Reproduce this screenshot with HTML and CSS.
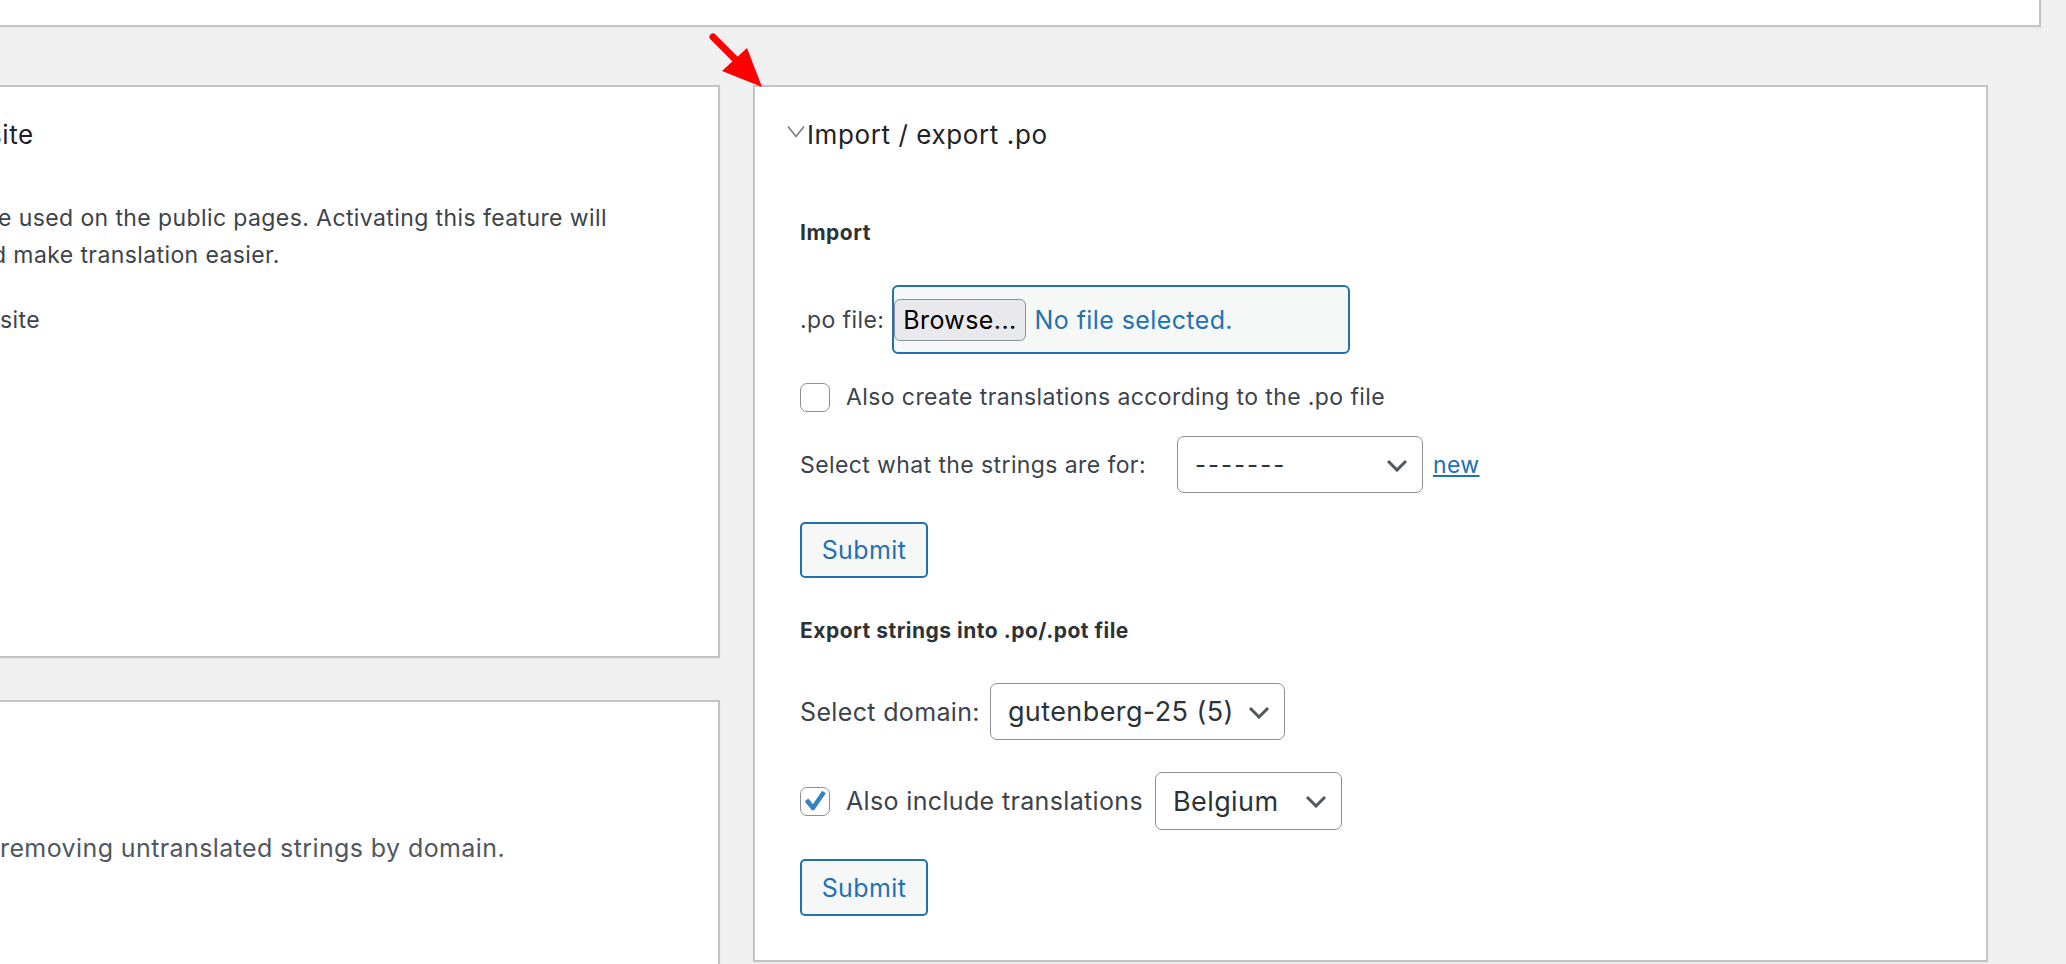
FILE: index.html
```html
<!DOCTYPE html>
<html lang="en">
<head>
  <meta charset="UTF-8">
  <title>String Translation - Import / export .po</title>
  <meta name="viewport" content="width=device-width, initial-scale=1.0">
  <link rel="stylesheet" href="styles.css">
</head>
<body>

  <!-- Top box (cut off) -->
  <div class="topbar"></div>

  <div class="columns">

    <!-- Left column, clipped by the window -->
    <div class="col-left">
      <div class="postbox box-track">
        <h2 class="box-title"><span class="cut-heading">site</span></h2>
        <p class="desc">
          <span class="line cut-1">e used on the public pages. Activating this feature will</span>
          <span class="line cut-2">d make translation easier.</span>
        </p>
        <p class="option">site</p>
      </div>
      <div class="postbox box-remove">
        <p class="desc muted">removing untranslated strings by domain.</p>
      </div>
    </div>

    <!-- Import / export .po -->
    <div class="postbox box-po">
      <h2 class="box-title po-title">
        <svg class="toggle" width="18" height="13" viewBox="0 0 18 13"><polyline points="1,1.5 9,11.5 17,1.5" fill="none" stroke="#787c82" stroke-width="1.6"/></svg>
        Import / export .po
      </h2>

      <h3 class="section import-title">Import</h3>

      <div class="row file-row">
        <span class="row-label">.po file:</span>
        <div class="file-input">
          <button type="button" class="browse">Browse...</button>
          <span class="file-name">No file selected.</span>
        </div>
      </div>

      <label class="row check-row">
        <span class="checkbox"></span>
        Also create translations according to the .po file
      </label>

      <div class="row select-row">
        <span class="row-label for-label">Select what the strings are for:</span>
        <span class="select-wrap wrap-context">
          <select class="select">
            <option>-------</option>
          </select>
          <svg class="arrow" width="22" height="13" viewBox="0 0 22 13"><polyline points="2,2 11,11 20,2" fill="none" stroke="#50575e" stroke-width="3"/></svg>
        </span>
        <a href="#" class="new-link">new</a>
      </div>

      <button type="button" class="button submit-import">Submit</button>

      <h3 class="section export-title">Export strings into .po/.pot file</h3>

      <div class="row domain-row">
        <span class="row-label big">Select domain:</span>
        <span class="select-wrap wrap-domain">
          <select class="select big">
            <option>gutenberg-25 (5)</option>
          </select>
          <svg class="arrow" width="22" height="13" viewBox="0 0 22 13"><polyline points="2,2 11,11 20,2" fill="none" stroke="#50575e" stroke-width="3"/></svg>
        </span>
      </div>

      <div class="row include-row">
        <span class="checkbox checked">
          <svg width="28" height="28" viewBox="0 0 28 28"><polyline points="6.5,14 13,22 24,6" fill="none" stroke="#3582c4" stroke-width="4.5" stroke-linejoin="round"/></svg>
        </span>
        <span class="row-label big">Also include translations</span>
        <span class="select-wrap wrap-lang">
          <select class="select big">
            <option>Belgium</option>
          </select>
          <svg class="arrow" width="22" height="13" viewBox="0 0 22 13"><polyline points="2,2 11,11 20,2" fill="none" stroke="#50575e" stroke-width="3"/></svg>
        </span>
      </div>

      <button type="button" class="button submit-export">Submit</button>
    </div>

  </div>

  <!-- annotation arrow -->
  <svg class="pointer" width="70" height="66" viewBox="0 0 70 66">
    <line x1="13" y1="7" x2="36" y2="30" stroke="#ff0000" stroke-width="7" stroke-linecap="round"/>
    <polygon points="22,41 47,18 62,57" fill="#ff0000"/>
  </svg>

</body>
</html>
```

FILE: styles.css
```css
body {
  margin: 0;
  height: 964px;
  overflow: hidden;
  background-color: #f0f0f1;
  font-family: Inter, "Liberation Sans", Arial, sans-serif;
  font-size: 23px;
  letter-spacing: 0.4px;
  color: #3c434a;
}

.topbar {
  width: 2039px;
  height: 25px;
  background-color: white;
  border-right: 2px solid #c3c4c7;
  border-bottom: 2px solid #c3c4c7;
  box-shadow: 0 1px 2px rgba(0,0,0,0.04);
}

.columns {
  display: flex;
  align-items: flex-start;
  gap: 33px;
  margin-top: 58px;
}

.col-left {
  width: 720px;
  flex: 0 0 720px;
  display: flex;
  flex-direction: column;
  gap: 42px;
}

.postbox {
  box-sizing: border-box;
  background-color: white;
  border: 2px solid #c3c4c7;
  box-shadow: 0 1px 2px rgba(0,0,0,0.04);
}

.col-left .postbox {
  border-left: none;
  overflow: hidden;
  white-space: nowrap;
}

.box-track {
  height: 573px;
  padding-top: 31px;
}

.box-remove {
  height: 300px;
  padding-top: 128px;
}

.box-title {
  margin: 0;
  font-size: 26px;
  font-weight: 400;
  letter-spacing: 0.6px;
  line-height: 34px;
  color: #1d2327;
}

.cut-heading {
  display: inline-block;
  margin-left: -12px;
}

.desc {
  margin: 48px 0 0;
  line-height: 37px;
}

.desc .line {
  display: block;
}

.cut-1 {
  margin-left: -2px;
}

.cut-2 {
  margin-left: -8px;
}

.option {
  margin: 28px 0 0;
  line-height: 37px;
}

.muted {
  margin: 0;
  font-size: 25px;
  color: #50575e;
}

/* Import / export box */
.box-po {
  flex: 0 0 1235px;
  height: 877px;
  padding: 31px 45px 0;
  display: flex;
  flex-direction: column;
  align-items: flex-start;
}

.po-title {
  display: flex;
  align-items: center;
  gap: 2px;
  margin-left: -13px;
}

.toggle {
  margin-top: -8px;
}

.section {
  margin: 0;
  font-size: 21px;
  font-weight: 700;
  letter-spacing: 0.5px;
  line-height: 30px;
  color: #2c3338;
}

.import-title {
  margin-top: 66px;
}

.export-title {
  margin-top: 38px;
}

.row {
  display: flex;
  align-items: center;
}

.row-label.big {
  font-size: 25px;
  letter-spacing: 0.35px;
}

.file-row {
  margin-top: 37px;
  gap: 8px;
}

.file-input {
  box-sizing: border-box;
  width: 458px;
  height: 69px;
  display: flex;
  align-items: center;
  background-color: #f6f7f7;
  border: 2px solid #2271b1;
  border-radius: 6px;
  font-size: 25px;
}

.browse {
  box-sizing: border-box;
  height: 42px;
  padding: 0 8px;
  background-color: #e9e9ed;
  border: 1.5px solid #8f8f9d;
  border-radius: 6px;
  font-family: inherit;
  font-size: 25px;
  letter-spacing: 0.4px;
  color: black;
}

.file-name {
  margin-left: 9px;
  color: #2271b1;
}

.check-row {
  margin-top: 28px;
  height: 30px;
}

.checkbox {
  box-sizing: border-box;
  width: 30px;
  height: 29px;
  margin-right: 16px;
  background-color: white;
  border: 1.5px solid #8c8f94;
  border-radius: 7px;
  flex: 0 0 auto;
}

.checkbox svg {
  display: block;
  margin: -1.5px 0 0 -1.5px;
}

.select-row {
  margin-top: 24px;
}

.for-label {
  margin-right: 31px;
}

.select-wrap {
  position: relative;
  display: inline-flex;
}

.select {
  box-sizing: border-box;
  height: 57px;
  padding: 0 50px 0 17px;
  appearance: none;
  -webkit-appearance: none;
  background-color: white;
  border: 1.5px solid #8c8f94;
  border-radius: 7px;
  font-family: inherit;
  font-size: 24px;
  color: #2c3338;
}

.select.big {
  font-size: 27px;
  letter-spacing: 0.4px;
}

.wrap-context .select {
  min-width: 246px;
  letter-spacing: 2px;
}

.wrap-domain .select {
  min-width: 290px;
}

.wrap-lang .select {
  min-width: 187px;
  height: 58px;
}

.arrow {
  position: absolute;
  top: 50%;
  right: 15px;
  margin-top: -6px;
  pointer-events: none;
}

.new-link {
  margin-left: 10px;
  color: #2271b1;
  text-decoration: underline;
}

.button {
  box-sizing: border-box;
  width: 128px;
  height: 56px;
  padding: 0;
  background-color: #f6f7f7;
  border: 2px solid #2271b1;
  border-radius: 5px;
  font-family: inherit;
  font-size: 25px;
  letter-spacing: 0.4px;
  color: #2271b1;
  cursor: pointer;
}

.submit-import {
  margin-top: 29px;
}

.domain-row {
  margin-top: 37px;
  gap: 10px;
}

.include-row {
  margin-top: 32px;
}

.include-row .row-label {
  margin-right: 12px;
}

.submit-export {
  margin-top: 29px;
  height: 57px;
}

.pointer {
  position: absolute;
  left: 700px;
  top: 30px;
}
```
